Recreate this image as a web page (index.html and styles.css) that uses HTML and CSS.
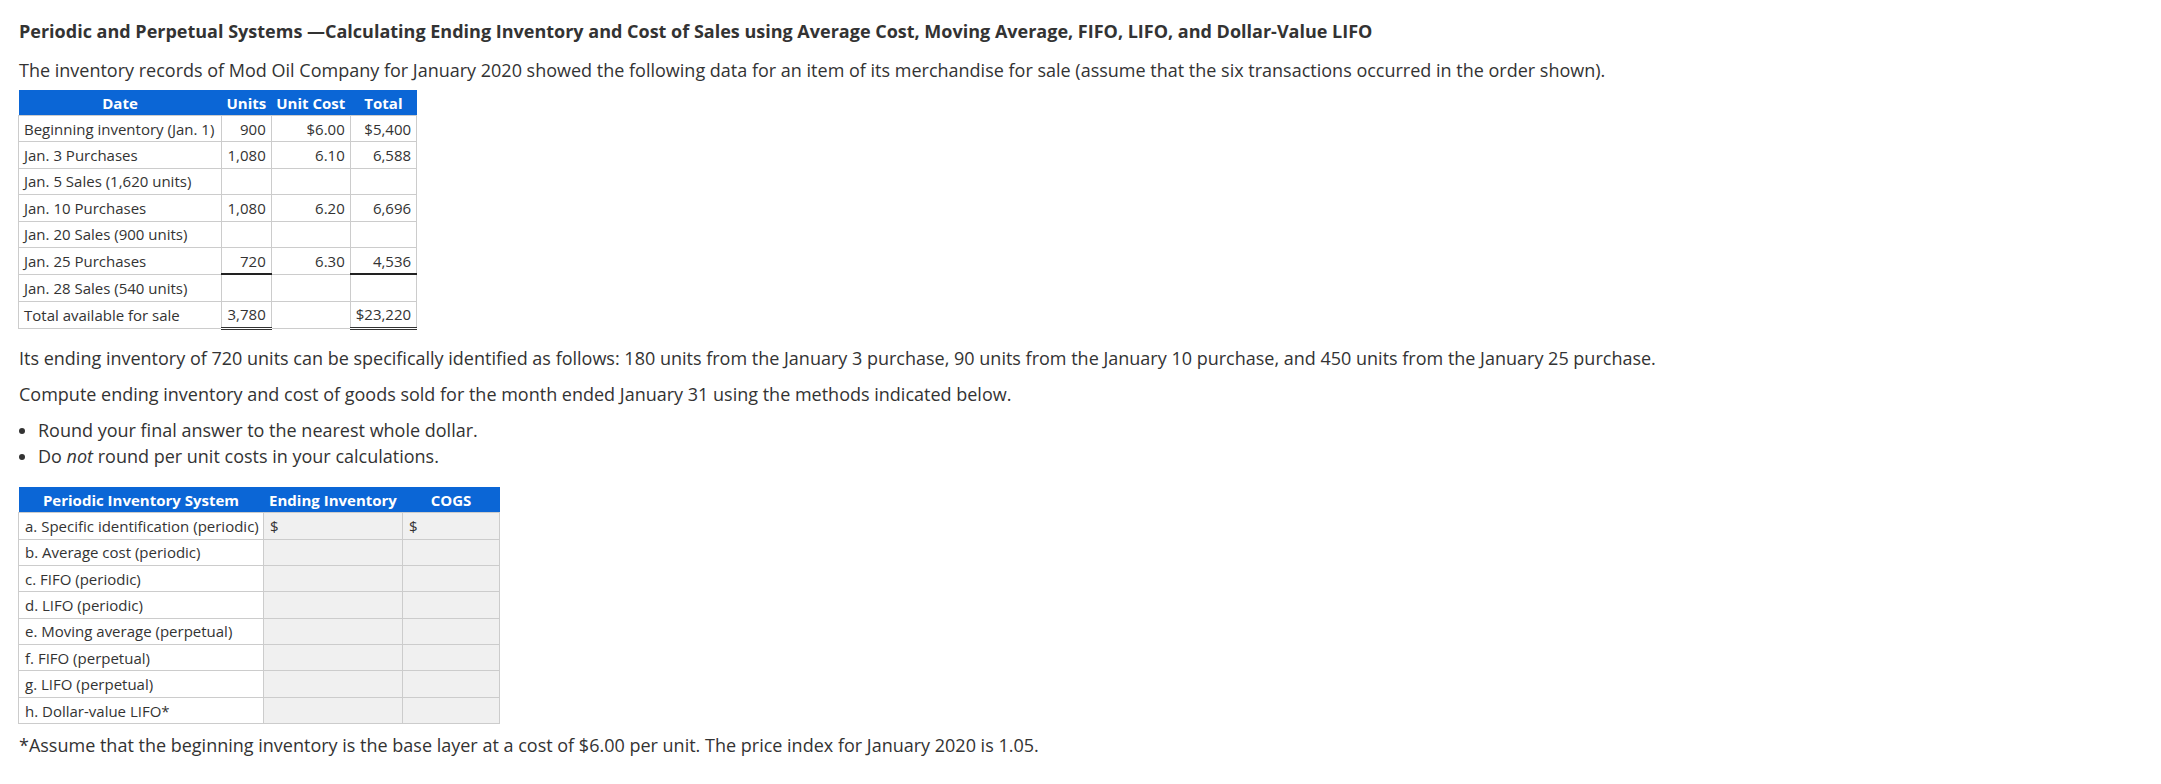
FILE: index.html
```html
<!DOCTYPE html>
<html>
<head>
<meta charset="utf-8">
<link rel="stylesheet" href="styles.css">
</head>
<body>
<div class="page">
  <h1 class="title">Periodic and Perpetual Systems —Calculating Ending Inventory and Cost of Sales using Average Cost, Moving Average, FIFO, LIFO, and Dollar-Value LIFO</h1>
  <p class="para">The inventory records of Mod Oil Company for January 2020 showed the following data for an item of its merchandise for sale (assume that the six transactions occurred in the order shown).</p>
  <table class="data">
    <thead>
      <tr><th class="c-date">Date</th><th class="c-units">Units</th><th class="c-cost">Unit Cost</th><th class="c-total">Total</th></tr>
    </thead>
    <tbody>
      <tr><td>Beginning inventory (Jan. 1)</td><td class="num">900</td><td class="num">$6.00</td><td class="num">$5,400</td></tr>
      <tr><td>Jan. 3 Purchases</td><td class="num">1,080</td><td class="num">6.10</td><td class="num">6,588</td></tr>
      <tr><td>Jan. 5 Sales (1,620 units)</td><td class="num"></td><td class="num"></td><td class="num"></td></tr>
      <tr><td>Jan. 10 Purchases</td><td class="num">1,080</td><td class="num">6.20</td><td class="num">6,696</td></tr>
      <tr><td>Jan. 20 Sales (900 units)</td><td class="num"></td><td class="num"></td><td class="num"></td></tr>
      <tr><td>Jan. 25 Purchases</td><td class="num ul">720</td><td class="num">6.30</td><td class="num ul">4,536</td></tr>
      <tr><td>Jan. 28 Sales (540 units)</td><td class="num"></td><td class="num"></td><td class="num"></td></tr>
      <tr><td>Total available for sale</td><td class="num dul">3,780</td><td class="num"></td><td class="num dul">$23,220</td></tr>
    </tbody>
  </table>
  <p class="para p-ending">Its ending inventory of 720 units can be specifically identified as follows: 180 units from the January 3 purchase, 90 units from the January 10 purchase, and 450 units from the January 25 purchase.</p>
  <p class="para p-compute">Compute ending inventory and cost of goods sold for the month ended January 31 using the methods indicated below.</p>
  <ul class="bullets">
    <li>Round your final answer to the nearest whole dollar.</li>
    <li>Do <em>not</em> round per unit costs in your calculations.</li>
  </ul>
  <table class="answer">
    <colgroup>
      <col class="a-sys"><col class="a-end"><col class="a-cogs">
    </colgroup>
    <thead>
      <tr><th>Periodic Inventory System</th><th>Ending Inventory</th><th>COGS</th></tr>
    </thead>
    <tbody>
      <tr><td>a. Specific identification (periodic)</td><td class="inp">$</td><td class="inp">$</td></tr>
      <tr><td>b. Average cost (periodic)</td><td class="inp"></td><td class="inp"></td></tr>
      <tr><td>c. FIFO (periodic)</td><td class="inp"></td><td class="inp"></td></tr>
      <tr><td>d. LIFO (periodic)</td><td class="inp"></td><td class="inp"></td></tr>
      <tr><td>e. Moving average (perpetual)</td><td class="inp"></td><td class="inp"></td></tr>
      <tr><td>f. FIFO (perpetual)</td><td class="inp"></td><td class="inp"></td></tr>
      <tr><td>g. LIFO (perpetual)</td><td class="inp"></td><td class="inp"></td></tr>
      <tr><td>h. Dollar-value LIFO*</td><td class="inp"></td><td class="inp"></td></tr>
    </tbody>
  </table>
  <p class="para p-foot">*Assume that the beginning inventory is the base layer at a cost of $6.00 per unit. The price index for January 2020 is 1.05.</p>
</div>
</body>
</html>
```

FILE: styles.css
```css
html, body {
  margin: 0;
  padding: 0;
  background: #ffffff;
}

.page {
  padding: 18px 18px 0 19px;
  font-family: "Open Sans", "Liberation Sans", sans-serif;
  color: #333333;
}

.title {
  margin: 0;
  font-size: 18px;
  font-weight: 700;
  line-height: 26px;
  color: #333333;
}

.para {
  margin: 0;
  font-size: 18px;
  line-height: 24px;
}

.title + .para {
  margin-top: 14px;
}

table {
  border-collapse: collapse;
  font-size: 15px;
  margin-left: -1px;
}

th {
  background: #0b66d6;
  color: #ffffff;
  font-weight: 700;
  height: 25px;
  padding: 0 4px;
  line-height: 18px;
  text-align: center;
  white-space: nowrap;
}

td {
  height: 25.4px;
  padding: 0 6px;
  border: 1px solid #cccccc;
  line-height: 18px;
  white-space: nowrap;
}

.data {
  margin-top: 8px;
  table-layout: auto;
}

.data th, .data td {
  padding-left: 5px;
  padding-right: 5px;
}

.data th.c-date { width: 193px; }
.data th.c-units { width: 39px; }
.data th.c-cost { width: 69px; }
.data th.c-total { width: 54px; }

.data td.num { text-align: right; }
.data td.ul { border-bottom: 2px solid #222222; }
.data td.dul { border-bottom: 3px double #333333; }

.p-ending { margin-top: 16px; }
.p-compute { margin-top: 12px; }

.bullets {
  margin: 11px 0 0 0;
  padding: 0 0 0 19px;
  font-size: 18px;
  line-height: 26px;
}

.answer {
  margin-top: 18px;
  table-layout: fixed;
  width: 481px;
}

.answer col.a-sys { width: 245px; }
.answer col.a-end { width: 139px; }
.answer col.a-cogs { width: 97px; }

.answer td.inp {
  background: #f0f0f0;
}

.p-foot { margin-top: 9px; }
```
